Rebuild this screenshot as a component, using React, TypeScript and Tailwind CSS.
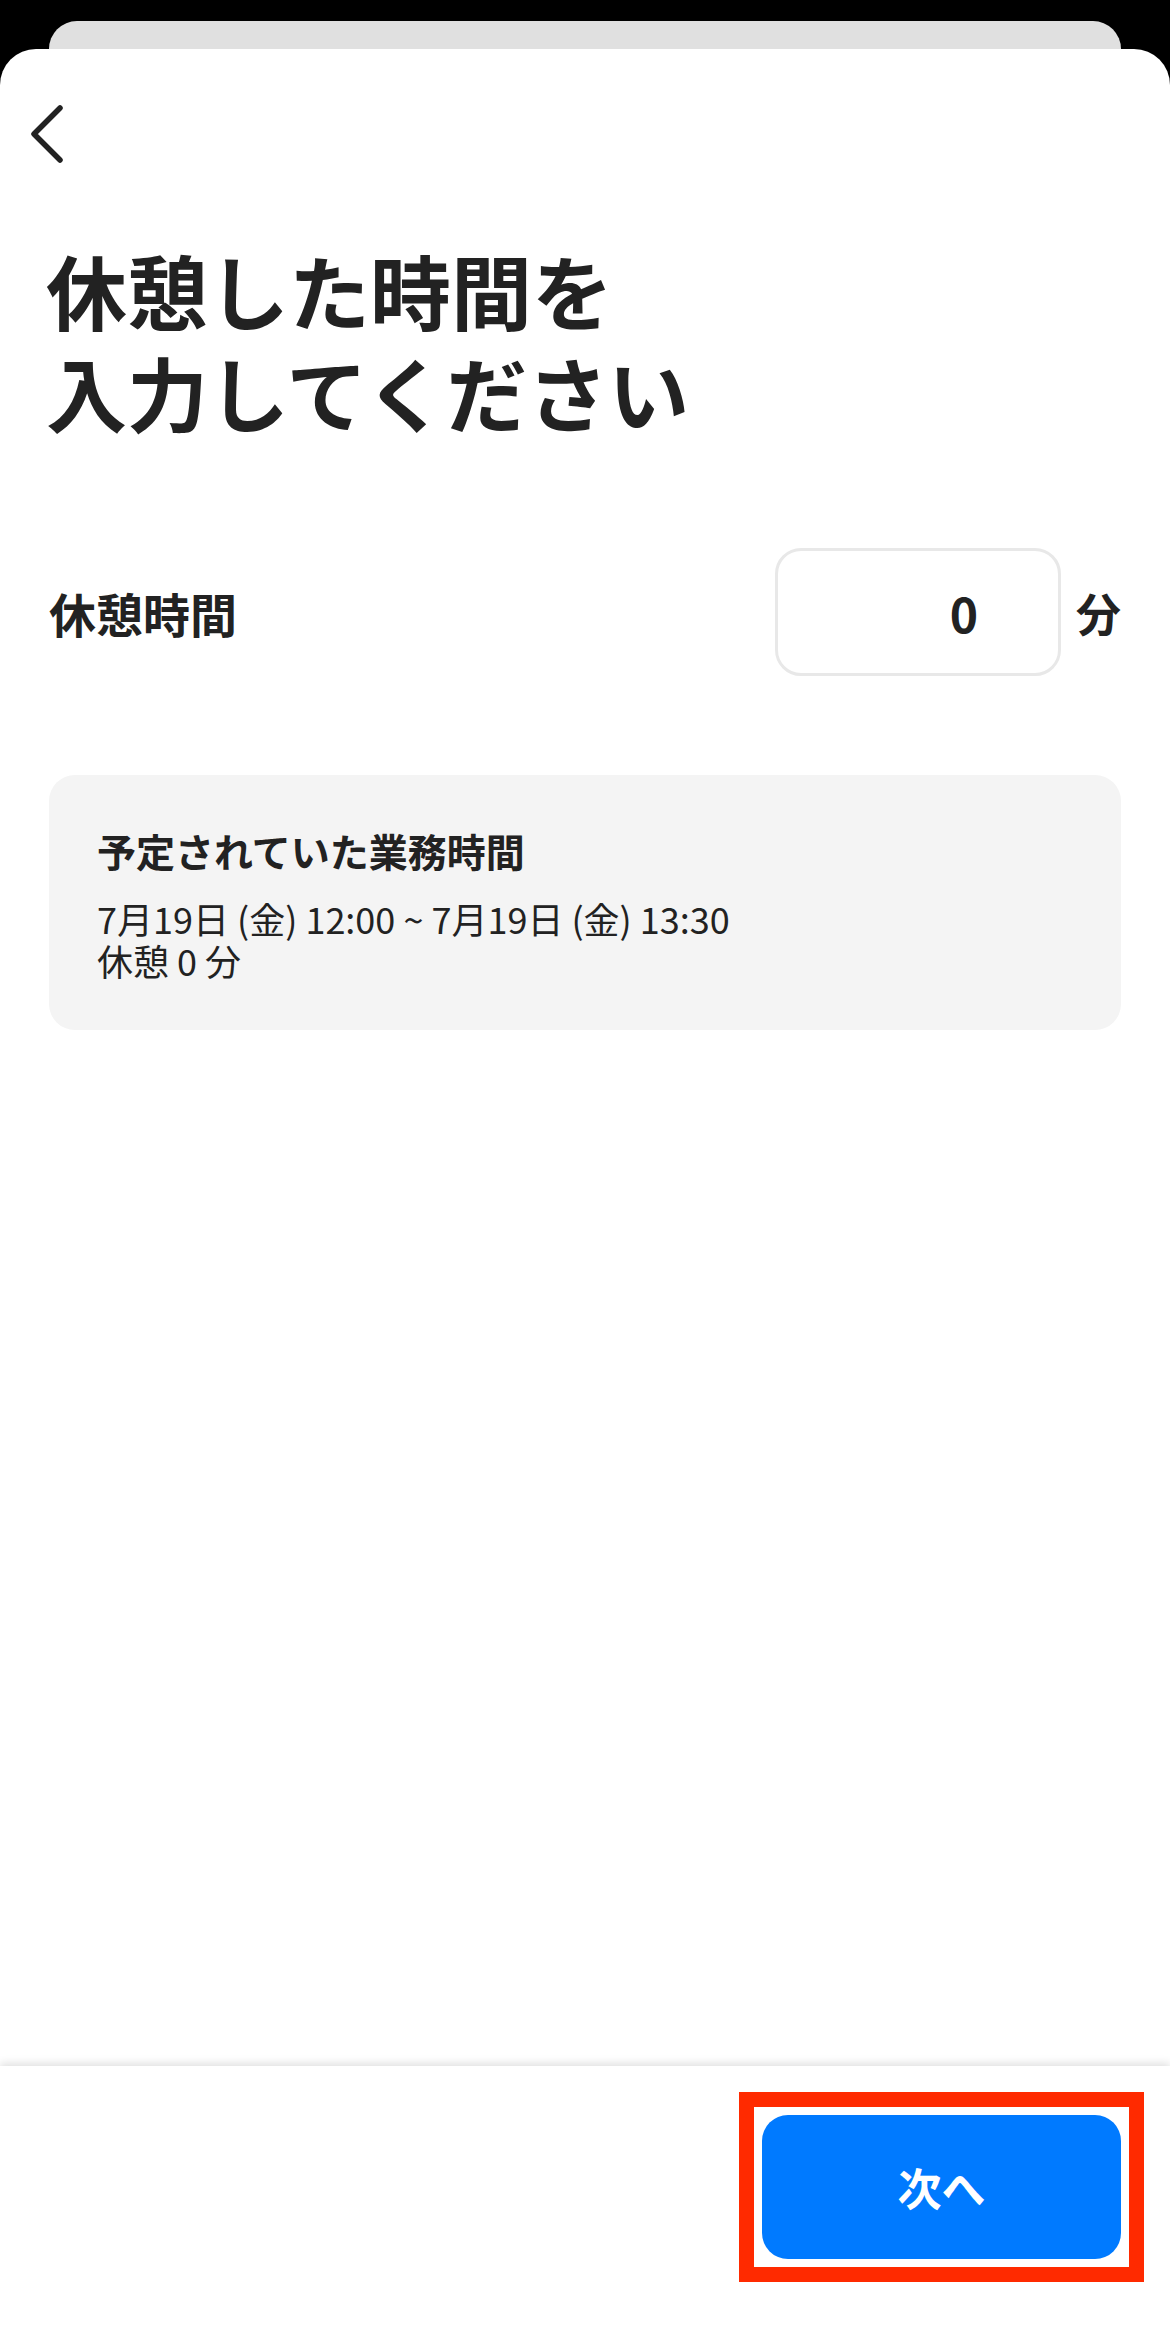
import React from "react";

const font = { fontFamily: '"Noto Sans CJK JP", "Noto Sans", sans-serif' };

export default function App() {
  return (
    <div
      className="w-[1170px] h-[2344px] bg-black flex flex-col overflow-hidden text-[#222222]"
      style={font}
    >
      <div className="pt-[21px] px-[49px]">
        <div className="h-[28px] rounded-t-[30px] bg-[#e0e0e0]" />
      </div>
      <div className="flex-1 bg-white rounded-t-[36px] flex flex-col">
        <div className="pt-[56px] pl-[27px]">
          <svg width="40" height="58" viewBox="0 0 40 58" fill="none">
            <path
              d="M33 3 L7 29 L33 55"
              stroke="#222222"
              strokeWidth="5.5"
              strokeLinecap="round"
              strokeLinejoin="round"
            />
          </svg>
        </div>
        <h1 className="mt-[75px] pl-[46px] text-[81px] leading-[102px] font-bold">
          休憩した時間を
          <br />
          入力してください
        </h1>
        <div className="mt-[106px] px-[49px] flex items-center">
          <div className="flex-1 text-[47px] font-bold leading-none">休憩時間</div>
          <div className="w-[286px] h-[128px] rounded-[26px] border-[3px] border-[#e8e8e8] flex items-center justify-end pr-[80px]">
            <span className="text-[48px] font-bold leading-none">0</span>
          </div>
          <div className="ml-[15px] text-[45px] font-bold leading-none">分</div>
        </div>
        <div className="mt-[99px] mx-[49px] rounded-[26px] bg-[#f4f4f4] pl-[48px] pt-[47px] pb-[49px]">
          <div className="text-[39px] font-bold leading-[56px]">予定されていた業務時間</div>
          <div className="mt-[19px] text-[36px] leading-[42px]">
            7月19日 (金) 12:00 ~ 7月19日 (金) 13:30
          </div>
          <div className="text-[36px] leading-[42px]">休憩 0 分</div>
        </div>
        <div className="flex-1" />
        <div className="h-[278px] bg-white shadow-[0_-3px_8px_rgba(0,0,0,0.12)] flex justify-end items-start pt-[26px] pr-[26px]">
          <div className="border-[15px] border-[#ff2a00] p-[8px]">
            <button className="w-[359px] h-[144px] rounded-[26px] bg-[#007aff] text-white text-[44px] font-bold flex items-center justify-center">
              次へ
            </button>
          </div>
        </div>
      </div>
    </div>
  );
}
